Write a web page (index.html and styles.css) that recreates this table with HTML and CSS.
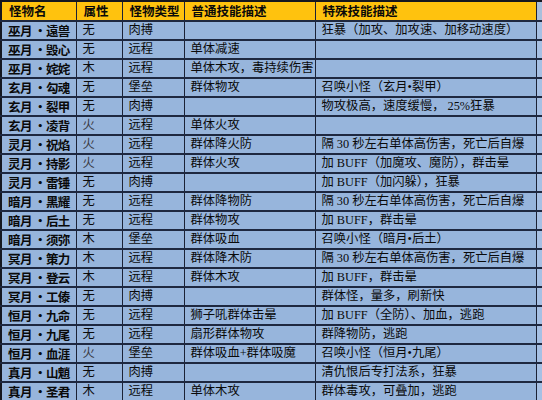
FILE: index.html
```html
<!DOCTYPE html>
<html lang="zh-CN">
<head>
<meta charset="utf-8">
<title>怪物技能表</title>
<link rel="stylesheet" href="styles.css">
</head>
<body>
<table class="mt">
<colgroup>
<col class="c1"><col class="c2"><col class="c3"><col class="c4"><col class="c5"><col class="c6">
</colgroup>
<thead>
<tr class="hd"><th>怪物名</th><th>属性</th><th>怪物类型</th><th>普通技能描述</th><th>特殊技能描述</th><th class="x"></th></tr>
</thead>
<tbody>
<tr><td class="n">巫月 •遠兽</td><td>无</td><td>肉搏</td><td></td><td>狂暴（加攻、加攻速、加移动速度）</td><td class="x"></td></tr>
<tr><td class="n">巫月 •毁心</td><td>无</td><td>远程</td><td>单体减速</td><td></td><td class="x"></td></tr>
<tr><td class="n">巫月 •姹姹</td><td>木</td><td>远程</td><td>单体木攻，毒持续伤害</td><td></td><td class="x"></td></tr>
<tr><td class="n">玄月 •勾魂</td><td>无</td><td>堡垒</td><td>群体物攻</td><td>召唤小怪（玄月•裂甲）</td><td class="x"></td></tr>
<tr><td class="n">玄月 •裂甲</td><td>无</td><td>肉搏</td><td></td><td>物攻极高，速度缓慢， 25%狂暴</td><td class="x"></td></tr>
<tr><td class="n">玄月 •凌背</td><td class="f">火</td><td>远程</td><td>单体火攻</td><td></td><td class="x"></td></tr>
<tr><td class="n">灵月 •祝焰</td><td class="f">火</td><td>远程</td><td>群体降火防</td><td>隔 30 秒左右单体高伤害，死亡后自爆</td><td class="x"></td></tr>
<tr><td class="n">灵月 •持影</td><td class="f">火</td><td>远程</td><td>群体火攻</td><td>加 BUFF（加魔攻、魔防），群击晕</td><td class="x"></td></tr>
<tr><td class="n">灵月 •雷锤</td><td>无</td><td>肉搏</td><td></td><td>加 BUFF（加闪躲），狂暴</td><td class="x"></td></tr>
<tr><td class="n">暗月 •黑耀</td><td>无</td><td>远程</td><td>群体降物防</td><td>隔 30 秒左右单体高伤害，死亡后自爆</td><td class="x"></td></tr>
<tr><td class="n">暗月 •后土</td><td>无</td><td>远程</td><td>群体物攻</td><td>加 BUFF，群击晕</td><td class="x"></td></tr>
<tr><td class="n">暗月 •须弥</td><td>木</td><td>堡垒</td><td>群体吸血</td><td>召唤小怪（暗月•后土）</td><td class="x"></td></tr>
<tr><td class="n">冥月 •策力</td><td>木</td><td>远程</td><td>群体降木防</td><td>隔 30 秒左右单体高伤害，死亡后自爆</td><td class="x"></td></tr>
<tr><td class="n">冥月 •登云</td><td>木</td><td>远程</td><td>群体木攻</td><td>加 BUFF，群击晕</td><td class="x"></td></tr>
<tr><td class="n">冥月 •工傣</td><td>无</td><td>肉搏</td><td></td><td>群体怪，量多，刷新快</td><td class="x"></td></tr>
<tr><td class="n">恒月 •九命</td><td>无</td><td>远程</td><td>狮子吼群体击晕</td><td>加 BUFF（全防）、加血，逃跑</td><td class="x"></td></tr>
<tr><td class="n">恒月 •九尾</td><td>无</td><td>远程</td><td>扇形群体物攻</td><td>群降物防，逃跑</td><td class="x"></td></tr>
<tr><td class="n">恒月 •血涯</td><td class="f">火</td><td>堡垒</td><td>群体吸血+群体吸魔</td><td>召唤小怪（恒月•九尾）</td><td class="x"></td></tr>
<tr><td class="n">真月 •山魈</td><td>无</td><td>肉搏</td><td></td><td>清仇恨后专打法系，狂暴</td><td class="x"></td></tr>
<tr><td class="n">真月 •圣君</td><td>木</td><td>远程</td><td>单体木攻</td><td>群体毒攻，可叠加，逃跑</td><td class="x"></td></tr>
</tbody>
</table>
</body>
</html>
```
FILE: styles.css
```css
html, body {
  margin: 0;
  padding: 0;
  background: #9bb7dd;
  overflow: hidden;
  width: 542px;
  height: 400px;
}
.mt {
  border-collapse: collapse;
  table-layout: fixed;
  width: 560px;
  font-family: "Liberation Serif", "Noto Sans CJK SC", serif;
  font-size: 12.3px;
  color: #0a0a0a;
  background: #97b5dc;
  border-top: 2px solid #15171f;
  border-left: 2px solid #15171f;
}
.c1 { width: 75px; }
.c2 { width: 46px; }
.c3 { width: 62px; }
.c4 { width: 131px; }
.c5 { width: 221px; }
.c6 { width: 25px; }
.mt th, .mt td {
  height: 17px;
  padding: 0 0 0 6px;
  text-align: left;
  white-space: nowrap;
  overflow: hidden;
  border-right: 1px solid #1b2236;
  border-bottom: 2px solid #1e2840;
  line-height: 17px;
  vertical-align: middle;
}
.hd th {
  background: #ffc20e;
  height: 17.5px;
  font-weight: bold;
  font-family: "Noto Sans CJK SC", sans-serif;
  font-size: 12.5px;
  padding-left: 7px;
}
.mt td.n {
  font-family: "Noto Sans CJK SC", sans-serif;
  font-weight: bold;
  font-size: 12.5px;
  padding-left: 6px;
  letter-spacing: -0.6px;
}
.mt td.f {
  color: #3a3a44;
}
.mt .x {
  background: #a6c0e4;
  border-right: none;
}
.hd .x {
  background: #a9bfdc;
}
```
